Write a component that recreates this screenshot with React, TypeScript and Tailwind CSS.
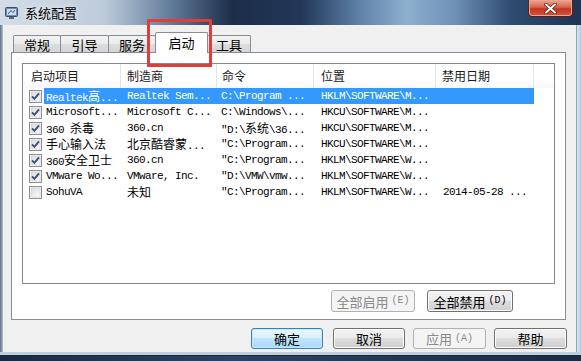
const CJK = /([\u3400-\u9fff]+)/

function Mixed({ text }: { text: string }) {
  const parts = text.split(CJK)
  return (
    <>
      {parts.map((p, i) =>
        CJK.test(p) ? (
          <span key={i} className="font-['Noto_Sans_CJK_SC',sans-serif] text-[12px] tracking-normal">
            {p}
          </span>
        ) : (
          <span key={i}>{p}</span>
        )
      )}
    </>
  )
}

const rows = [
  { on: true, cells: ['Realtek高...', 'Realtek Sem...', 'C:\\Program ...', 'HKLM\\SOFTWARE\\M...', ''] },
  { on: true, cells: ['Microsoft...', 'Microsoft C...', 'C:\\Windows\\...', 'HKCU\\SOFTWARE\\M...', ''] },
  { on: true, cells: ['360 杀毒', '360.cn', '"D:\\系统\\36...', 'HKCU\\SOFTWARE\\M...', ''] },
  { on: true, cells: ['手心输入法', '北京酷睿蒙...', '"C:\\Program...', 'HKCU\\SOFTWARE\\M...', ''] },
  { on: true, cells: ['360安全卫士', '360.cn', '"C:\\Program...', 'HKLM\\SOFTWARE\\W...', ''] },
  { on: true, cells: ['VMware Wo...', 'VMware, Inc.', '"D:\\VMW\\vmw...', 'HKLM\\SOFTWARE\\W...', ''] },
  { on: false, cells: ['SohuVA', '未知', '"C:\\Program...', 'HKLM\\SOFTWARE\\W...', '2014-05-28 ...'] },
]

function Check({ on }: { on: boolean }) {
  return (
    <svg width="13" height="13" viewBox="0 0 13 13">
      <defs>
        <linearGradient id="cbg" x1="0" y1="0" x2="1" y2="1">
          <stop offset="0" stopColor="#dcdcdc" />
          <stop offset="1" stopColor="#fbfbfb" />
        </linearGradient>
      </defs>
      <rect x="0.5" y="0.5" width="12" height="12" fill="#f6f6f6" stroke="#8f8f8f" />
      <rect x="2" y="2" width="9" height="9" fill="url(#cbg)" stroke="#c6c6c6" strokeWidth="0.5" />
      {on && <path d="M3 6.3 L5.4 8.8 L10 3.4" fill="none" stroke="#3e5078" strokeWidth="1.9" />}
    </svg>
  )
}

function Btn({ label, hint, className, kind = 'normal' }: { label: string; hint?: string; className: string; kind?: 'normal' | 'focus' | 'off' }) {
  const look =
    kind === 'focus'
      ? 'border-[#3c7fb1] bg-[linear-gradient(180deg,#eaf6fd_0%,#d9f0fc_50%,#bee6fd_50%,#a7d9f5_100%)] text-black shadow-[inset_0_0_0_1px_#c8e8fb]'
      : kind === 'off'
        ? 'border-[#adb2b5] bg-[#f4f4f4] text-[#8a8a8a]'
        : 'border-[#707070] bg-[linear-gradient(180deg,#f2f2f2_0%,#ebebeb_50%,#dddddd_50%,#cfcfcf_100%)] text-black shadow-[inset_0_0_0_1px_#fcfcfc]'
  return (
    <div className={`flex items-center justify-center border rounded-[3px] text-[13px] leading-none ${look} ${className}`}>
      <span>{label}</span>
      {hint && <span className="ml-[3px] font-['Liberation_Mono',monospace] text-[10px]">{hint}</span>}
    </div>
  )
}

const tabs = [
  { t: '常规', w: 'w-[48px]' },
  { t: '引导', w: 'w-[49px]' },
  { t: '服务', w: 'w-[48px]' },
  { t: '启动', w: 'w-[53px]', sel: true },
  { t: '工具', w: 'w-[44px]' },
]

const colW = ['w-[98px]', 'w-[96px]', 'w-[97px]', 'w-[122px]', 'w-[98px]']
const heads = ['启动项目', '制造商', '命令', '位置', '禁用日期']
const headPad = ['pl-[8px]', 'pl-[6px]', 'pl-[5px]', 'pl-[7px]', 'pl-[6px]']
const cellW = ['w-[77px] pl-[2px]', 'w-[96px] pl-[6px]', 'w-[97px] pl-[4px]', 'w-[122px] pl-[7px]', 'w-[98px] pl-[7px]']

export default function App() {
  return (
    <div className="relative w-[581px] h-[361px] overflow-hidden bg-[#16253b] font-['Noto_Sans_CJK_SC',sans-serif]">
      <div className="flex flex-col h-full">
        {/* title bar */}
        <div className="flex items-start justify-between h-[25px] bg-[linear-gradient(90deg,#d3dee8_0%,#bccbda_18%,#5d7896_30%,#1c2d47_40%,#22385a_52%,#5f83a8_62%,#8db0cf_70%,#6f92b6_78%,#2e4b70_88%,#1e3553_100%)]">
          <div className="flex items-center h-[25px] pl-[5px] gap-[7px]">
            <svg width="13" height="12" viewBox="0 0 13 12">
              <rect x="0.5" y="0.5" width="12" height="9" rx="1" fill="#6f8db0" stroke="#3b4f6b" />
              <rect x="2" y="2" width="9" height="6" fill="#c9dcef" />
              <path d="M3 7 L6 3.5 L8 5.5 L10 3" fill="none" stroke="#2f5f9a" strokeWidth="1" />
              <rect x="4" y="10" width="5" height="2" fill="#5a6c82" />
            </svg>
            <span className="text-[13px] text-black leading-none [text-shadow:0_0_6px_#ffffff]">系统配置</span>
          </div>
          <div className="mr-[8px] w-[45px] h-[17px] flex items-center justify-center rounded-b-[4px] border border-t-0 border-[#5b1e18] bg-[linear-gradient(180deg,#eba895_0%,#d8644c_45%,#c2361f_55%,#d9553a_100%)] shadow-[inset_0_0_0_1px_#f0a48f]">
            <svg width="13" height="11" viewBox="0 0 13 11">
              <path d="M2 1.5 L11 9.5 M11 1.5 L2 9.5" stroke="#5a1d16" strokeWidth="3.6" strokeLinecap="round" />
              <path d="M2 1.5 L11 9.5 M11 1.5 L2 9.5" stroke="#ffffff" strokeWidth="2" strokeLinecap="round" />
            </svg>
          </div>
        </div>

        <div className="flex h-[327px]">
          <div className="w-[3px] bg-[linear-gradient(90deg,#5d6f84,#b4c4d4)]" />
          {/* client area */}
          <div className="w-[573px] bg-[#f0f0f0] flex flex-col">
            <div className="flex items-end h-[20px] mt-[7px] pl-[10px]">
              {tabs.map((t, i) =>
                t.sel ? (
                  <div
                    key={t.t}
                    className={`relative z-10 -ml-px -mb-px h-[21px] ${t.w} flex items-start justify-center pt-[3px] border border-b-0 border-[#898c95] rounded-t-[2px] bg-white text-[13px] leading-none text-black`}
                  >
                    {t.t}
                  </div>
                ) : (
                  <div
                    key={t.t}
                    className={`${i === 0 ? '' : '-ml-px'} h-[17px] ${t.w} flex items-center justify-center border border-b-0 border-[#898c95] rounded-t-[2px] bg-[linear-gradient(180deg,#f2f2f2_0%,#ebebeb_50%,#dddddd_50%,#d5d5d5_100%)] text-[13px] leading-none text-black`}
                  >
                    {t.t}
                  </div>
                )
              )}
            </div>

            {/* tab panel */}
            <div className="ml-[8px] w-[555px] h-[268px] border border-[#898c95] bg-white flex flex-col">
              <div className="ml-[10px] mt-[10px] w-[533px] h-[221px] border border-[#828790] bg-white">
                <div className="flex h-[24px] bg-[linear-gradient(180deg,#ffffff_0%,#ffffff_60%,#f7f8fa_100%)]">
                  {heads.map((h, i) => (
                    <div key={h} className={`${colW[i]} ${headPad[i]} flex items-center border-r border-[#e2e5ea] text-[12px] leading-none text-[#1a1a1a]`}>
                      {h}
                    </div>
                  ))}
                </div>
                {rows.map((r, ri) => (
                  <div key={ri} className="flex h-[16px] font-['Liberation_Mono','Noto_Sans_CJK_SC',monospace] text-[11px] tracking-[-0.6px] leading-[16px] text-black">
                    <div className="w-[21px] flex items-center pl-[6px]">
                      <Check on={r.on} />
                    </div>
                    <div className={`flex w-[490px] ${ri === 0 ? 'bg-[#3399ff] text-white' : ''}`}>
                      {r.cells.map((c, ci) => (
                        <div key={ci} className={`${cellW[ci]} whitespace-pre overflow-hidden`}>
                          <Mixed text={c} />
                        </div>
                      ))}
                    </div>
                  </div>
                ))}
              </div>
              <div className="flex justify-end gap-[12px] mt-[6px] pr-[52px]">
                <Btn label="全部启用" hint="(E)" kind="off" className="w-[84px] h-[22px]" />
                <Btn label="全部禁用" hint="(D)" className="w-[86px] h-[22px]" />
              </div>
            </div>

            <div className="flex justify-end mt-[8px] pr-[9px]">
              <Btn label="确定" kind="focus" className="w-[72px] h-[21px]" />
              <Btn label="取消" className="ml-[10px] w-[72px] h-[21px]" />
              <Btn label="应用" hint="(A)" kind="off" className="ml-[8px] w-[73px] h-[21px]" />
              <Btn label="帮助" className="ml-[8px] w-[73px] h-[21px]" />
            </div>
          </div>
          <div className="w-[5px] border-l border-[#8ea4bb] bg-[linear-gradient(90deg,#d7e5f1,#b9cde0)]" />
        </div>

        <div className="h-[9px] flex flex-col">
          <div className="h-[3px] bg-[#bfcfdd]" />
          <div className="h-[1px] bg-[#1a2636]" />
          <div className="flex-1 bg-[linear-gradient(90deg,#1a2940,#2b4464_40%,#1a2a42)]" />
        </div>
      </div>

      {/* red annotation box */}
      <div className="absolute left-[147px] top-[19px] w-[65px] h-[48px] border-[3px] border-[#df3f3b]" />
    </div>
  )
}
